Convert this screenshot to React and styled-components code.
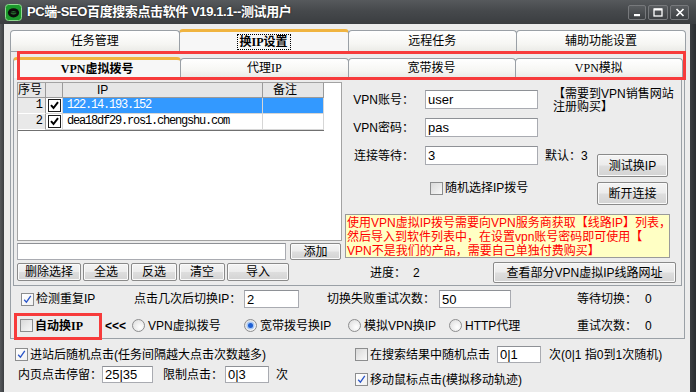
import React from 'react';
import styled, { createGlobalStyle, css } from 'styled-components';

const UI = `"Liberation Sans", "Noto Sans CJK SC", sans-serif`;
const SERIF = `"Liberation Serif", "Noto Sans CJK SC", serif`;
const MONO = `"Liberation Mono", "Noto Sans CJK SC", monospace`;

const GlobalStyle = createGlobalStyle`
  html, body { margin: 0; padding: 0; overflow: hidden; background: #2d3033; }
  body { font-family: ${UI}; font-size: 12px; line-height: 14px; color: #000; }
  *, *::before, *::after { box-sizing: border-box; }
  input, button { font-family: inherit; }
`;

const Window = styled.div`
  position: relative;
  width: 696px;
  height: 392px;
  display: flex;
  flex-direction: column;
  background: linear-gradient(90deg, #55585b 0, #3b3e41 4px, #3b3e41 calc(100% - 6px), #2a2d30 100%);
  overflow: hidden;
`;

const TitleBar = styled.div`
  flex: none;
  height: 24px;
  display: flex;
  align-items: center;
  padding: 0 7px 0 5px;
  background: linear-gradient(#56595c, #46494c 45%, #3a3d40);
`;

const TitleText = styled.div`
  margin-left: 5px;
  color: #fff;
  font: bold 13px/16px ${UI};
  letter-spacing: -0.4px;
  white-space: nowrap;
  text-shadow: 0 0 2px rgba(0, 0, 0, 0.7);
`;

const Caption = styled.div`
  margin-left: auto;
  align-self: flex-start;
  margin-top: 5px;
  display: flex;
  gap: 2px;
`;

const CapBtn = styled.div`
  width: ${p => p.$w}px;
  height: 15px;
  border: 1px solid #77797c;
  border-radius: 2px;
  background: linear-gradient(#5a5d60, #3d4043);
  display: flex;
  align-items: center;
  justify-content: center;
`;

const Body = styled.div`
  flex: 1;
  min-height: 0;
  margin: 0 6px 0 4px;
  padding: 5px 5px 0 6px;
  background: #ececec;
  display: flex;
  flex-direction: column;
`;

const TabStrip = styled.div`
  flex: none;
  display: flex;
  align-items: flex-end;
  height: ${p => p.$h}px;
  position: relative;
  z-index: 1;
`;

const Tab = styled.div`
  flex: 1 1 0;
  min-width: 0;
  height: calc(100% - 1px);
  display: flex;
  align-items: center;
  justify-content: center;
  border: 1px solid #9aa0a6;
  border-bottom: 0;
  border-radius: 4px 4px 0 0;
  margin-right: -1px;
  background: linear-gradient(#ffffff, #f6f6f3 65%, #ebebe7);
  font: normal 12px/14px ${SERIF};
  white-space: nowrap;
  ${p => p.$active && css`
    height: calc(100% + 1px);
    margin-bottom: -1px;
    border-top: 3px solid #f0b440;
    background: #f7f7f7;
    font-weight: bold;
    position: relative;
    z-index: 2;
  `}
`;

const Focus = styled.span`
  outline: 1px dotted #000;
  padding: 0 2px;
`;

const TabPage = styled.div`
  flex: none;
  height: 288px;
  border: 1px solid #9aa0a6;
  padding: 5px 2px 0;
  display: flex;
  flex-direction: column;
`;

const SubPage = styled.div`
  flex: none;
  height: 209px;
  border: 1px solid #9aa0a6;
  display: flex;
  padding: 4px 0 0 3px;
`;

const LeftCol = styled.div`
  flex: none;
  width: 325px;
  display: flex;
  flex-direction: column;
`;

const ListView = styled.div`
  flex: none;
  height: 159px;
  border: 1px solid #a3a3a3;
  background: #fff;
`;

const DataGrid = styled.div`
  display: grid;
  width: 306px;
  grid-template-columns: 28px 17px 200px 61px;
  grid-auto-rows: 16px;
  grid-template-rows: 15px;
  border-right: 1px solid #707070;
  border-bottom: 1px solid #707070;
`;

const HeadCell = styled.div`
  background: #e6e6e6;
  border-right: 1px solid #9a9a9a;
  border-bottom: 1px solid #9a9a9a;
  padding-left: ${p => p.$pl || 0}px;
  font: 12px/14px ${UI};
  white-space: nowrap;
  overflow: hidden;
`;

const NumCell = styled.div`
  background: #e9e9e9;
  border-right: 1px solid #9a9a9a;
  border-bottom: 1px solid #ffffff;
  text-align: right;
  padding-right: 3px;
  font: 12px/15px ${MONO};
  letter-spacing: -1px;
`;

const DataCell = styled.div`
  display: flex;
  align-items: center;
  justify-content: ${p => (p.$center ? 'center' : 'flex-start')};
  padding-left: ${p => (p.$center ? 0 : 4)}px;
  border-right: 1px solid #d6d6d6;
  border-bottom: 1px solid #d6d6d6;
  background: ${p => (p.$sel ? '#3399ff' : '#fff')};
  color: ${p => (p.$sel ? '#fff' : '#000')};
  font: 12px/15px ${MONO};
  letter-spacing: -1.2px;
  white-space: nowrap;
  overflow: hidden;
`;

const InputRow = styled.div`
  flex: none;
  display: flex;
  gap: 4px;
  height: 17px;
  margin-top: 2px;
`;

const ButtonRow = styled.div`
  flex: none;
  display: flex;
  gap: 2px;
  height: 18px;
  margin-top: 3px;
`;

const Btn = styled.button`
  flex: none;
  width: ${p => p.$w}px;
  height: ${p => p.$h || 18}px;
  padding: 0;
  margin-left: ${p => (p.$push ? 'auto' : '0')};
  font: 12px/1 ${UI};
  color: #000;
  border: 1px solid #8a8a8a;
  border-radius: 2px;
  background: linear-gradient(#f4f4f4, #ececec 48%, #dedede 52%, #d3d3d3);
  box-shadow: inset 0 0 0 1px #fafafa;
  white-space: nowrap;
`;

const Field = styled.input`
  flex: none;
  width: ${p => p.$w}px;
  height: ${p => p.$h || 18}px;
  margin-left: ${p => p.$ml || 0}px;
  border: 1px solid #a9abb1;
  border-top-color: #8e9196;
  background: #fff;
  padding: 0 2px;
  font: 13px/1 ${UI};
  color: #000;
  outline: none;
`;

const RightCol = styled.div`
  flex: 1;
  min-width: 0;
  padding: 8px 5px 0 2px;
  display: flex;
  flex-direction: column;
`;

const FormGrid = styled.div`
  display: grid;
  grid-template-columns: 81px 120px 52px 71px;
  grid-template-rows: 19px 19px 19px 31px;
  row-gap: 9px;
  align-items: center;
`;

const FieldLabel = styled.div`
  grid-column: 1;
  text-align: right;
  padding-right: 11px;
  white-space: nowrap;
`;

const Hint = styled.div`
  grid-column: 3 / 5;
  grid-row: 1 / 3;
  align-self: start;
  margin: -2px 0 0 8px;
  line-height: 13px;
  white-space: nowrap;
`;

const Default = styled.div`
  grid-column: 3;
  grid-row: 3;
  white-space: nowrap;
`;

const ButtonStack = styled.div`
  grid-column: 4;
  grid-row: 3 / 5;
  align-self: start;
  margin-top: 8px;
  display: flex;
  flex-direction: column;
  gap: 5px;
`;

const RandomOpt = styled.div`
  grid-column: 2 / 4;
  grid-row: 4;
  margin-left: 5px;
`;

const Notice = styled.div`
  flex: none;
  width: 325px;
  height: 44px;
  margin: 9px 0 0 1px;
  padding: 1px 0 0 1px;
  border: 1px solid #9a9a9a;
  background: #ffffc4;
  color: #ff0000;
  line-height: 14px;
  white-space: nowrap;
  overflow: hidden;
`;

const ProgressRow = styled.div`
  flex: none;
  display: flex;
  align-items: center;
  height: 21px;
  margin-top: 4px;
  padding-left: 26px;
`;

const Text = styled.span`
  flex: none;
  width: ${p => (p.$w ? `${p.$w}px` : 'auto')};
  margin-left: ${p => p.$ml || 0}px;
  font-weight: ${p => (p.$bold ? 'bold' : 'normal')};
  white-space: nowrap;
`;

const OptRow = styled.div`
  flex: none;
  display: flex;
  align-items: center;
  height: ${p => p.$h}px;
  margin-top: ${p => p.$mt || 0}px;
  padding-left: ${p => p.$pl || 0}px;
  white-space: nowrap;
`;

const Option = styled.span`
  flex: none;
  display: inline-flex;
  align-items: center;
  gap: ${p => p.$gap ?? 2}px;
  width: ${p => (p.$w ? `${p.$w}px` : 'auto')};
  font-weight: ${p => (p.$bold ? 'bold' : 'normal')};
  font-family: ${p => (p.$bold ? SERIF : UI)};
  white-space: nowrap;
`;

const Box = styled.span`
  flex: none;
  width: 13px;
  height: 13px;
  display: inline-flex;
  align-items: center;
  justify-content: center;
  border: 1px solid ${p => (p.$list ? '#1c1c1c' : '#8c8d8e')};
  background: ${p =>
    p.$list ? '#fff' : p.$on ? 'linear-gradient(135deg, #ffffff, #f1f1f1)' : 'linear-gradient(135deg, #d9d9d9, #f8f8f8)'};
`;

const RadioDot = styled.span`
  flex: none;
  width: 13px;
  height: 13px;
  border-radius: 50%;
  border: 1px solid #8c8d8e;
  background: radial-gradient(circle at 65% 65%, #ffffff, #dadada);
  display: inline-flex;
  align-items: center;
  justify-content: center;
  &::after {
    content: '';
    display: ${p => (p.$on ? 'block' : 'none')};
    width: 5px;
    height: 5px;
    border-radius: 50%;
    background: #1d5fd3;
    box-shadow: 0 0 0 1.5px #a9c8f3;
  }
`;

const BottomArea = styled.div`
  flex: none;
  display: flex;
  margin-top: 7px;
`;

const BottomCol = styled.div`
  flex: none;
  width: ${p => (p.$w ? `${p.$w}px` : 'auto')};
  padding-left: ${p => p.$pl || 0}px;
  display: flex;
  flex-direction: column;
`;

const Marker = styled.div`
  position: absolute;
  left: ${p => p.$x}px;
  top: ${p => p.$y}px;
  width: ${p => p.$w}px;
  height: ${p => p.$h}px;
  border: 3px solid #f73b3b;
  pointer-events: none;
  z-index: 5;
`;

const Check = ({ on, list }) => (
  <Box $on={on} $list={list}>
    {on && (
      <svg width="9" height="9" viewBox="0 0 9 9">
        <path
          d={list ? 'M1 4.2 L3.5 7 L8 1.2' : 'M1.2 4.8 L3.4 7.2 L7.8 0.8'}
          fill="none"
          stroke={list ? '#000' : '#2a55c8'}
          strokeWidth={list ? 2 : 1.3}
        />
      </svg>
    )}
  </Box>
);

const CheckOpt = ({ on, children, w, bold, gap }) => (
  <Option $w={w} $bold={bold} $gap={gap}>
    <Check on={on} />
    <span>{children}</span>
  </Option>
);

const RadioOpt = ({ on, children, w }) => (
  <Option $w={w} $gap={3}>
    <RadioDot $on={on} />
    <span>{children}</span>
  </Option>
);

const AppIcon = () => (
  <svg width="17" height="17" viewBox="0 0 17 17">
    <rect x="0.5" y="0.5" width="16" height="16" rx="3" fill="#1c9a2c" stroke="#8fd88f" />
    <ellipse cx="8.5" cy="8.8" rx="5.6" ry="4.6" fill="#0c0c0c" />
    <ellipse cx="8.5" cy="8.8" rx="3" ry="1.6" fill="#2f8f3a" />
    <rect x="5" y="8.3" width="7" height="1" fill="#0c0c0c" />
  </svg>
);

const rows = [
  { n: 1, ip: '122.14.193.152', sel: true },
  { n: 2, ip: 'dea18df29.ros1.chengshu.com', sel: false },
];

export default function App() {
  return (
    <>
      <GlobalStyle />
      <Window>
        <TitleBar>
          <AppIcon />
          <TitleText>PC端-SEO百度搜索点击软件 V19.1.1--测试用户</TitleText>
          <Caption>
            <CapBtn $w={18}>
              <svg width="8" height="8" viewBox="0 0 8 8"><rect x="1" y="5" width="6" height="2.2" fill="#fff" /></svg>
            </CapBtn>
            <CapBtn $w={20}>
              <svg width="10" height="9" viewBox="0 0 10 9"><rect x="1" y="1" width="8" height="7" fill="none" stroke="#fff" strokeWidth="1.3" /><rect x="1" y="0.5" width="8" height="2" fill="#fff" /></svg>
            </CapBtn>
            <CapBtn $w={19}>
              <svg width="10" height="9" viewBox="0 0 10 9"><path d="M1.5 1 L8.5 8 M8.5 1 L1.5 8" stroke="#fff" strokeWidth="1.7" /></svg>
            </CapBtn>
          </Caption>
        </TitleBar>

        <Body>
          <TabStrip $h={22}>
            <Tab>任务管理</Tab>
            <Tab $active><Focus>换IP设置</Focus></Tab>
            <Tab>远程任务</Tab>
            <Tab>辅助功能设置</Tab>
          </TabStrip>
          <TabPage>
            <TabStrip $h={20}>
              <Tab $active>VPN虚拟拨号</Tab>
              <Tab>代理IP</Tab>
              <Tab>宽带拨号</Tab>
              <Tab>VPN模拟</Tab>
            </TabStrip>
            <SubPage>
              <LeftCol>
                <ListView>
                  <DataGrid>
                    <HeadCell>序号</HeadCell>
                    <HeadCell />
                    <HeadCell $pl={34}>IP</HeadCell>
                    <HeadCell $pl={10}>备注</HeadCell>
                    {rows.map(r => (
                      <React.Fragment key={r.n}>
                        <NumCell>{r.n}</NumCell>
                        <DataCell $center><Check on list /></DataCell>
                        <DataCell $sel={r.sel}>{r.ip}</DataCell>
                        <DataCell $sel={r.sel} />
                      </React.Fragment>
                    ))}
                  </DataGrid>
                </ListView>
                <InputRow>
                  <Field $w={269} $h={17} readOnly value="" />
                  <Btn $w={51} $h={17}>添加</Btn>
                </InputRow>
                <ButtonRow>
                  <Btn $w={64}>删除选择</Btn>
                  <Btn $w={46}>全选</Btn>
                  <Btn $w={46}>反选</Btn>
                  <Btn $w={46}>清空</Btn>
                  <Btn $w={62}>导入</Btn>
                </ButtonRow>
              </LeftCol>

              <RightCol>
                <FormGrid>
                  <FieldLabel>VPN账号：</FieldLabel>
                  <Field $w={113} $h={19} readOnly value="user" />
                  <Hint>【需要到VPN销售网站<br />注册购买】</Hint>
                  <FieldLabel>VPN密码：</FieldLabel>
                  <Field $w={113} $h={19} readOnly value="pas" />
                  <FieldLabel>连接等待：</FieldLabel>
                  <Field $w={113} $h={19} readOnly value="3" />
                  <Default>默认：3</Default>
                  <ButtonStack>
                    <Btn $w={71} $h={23}>测试换IP</Btn>
                    <Btn $w={71} $h={23}>断开连接</Btn>
                  </ButtonStack>
                  <RandomOpt>
                    <CheckOpt>随机选择IP拨号</CheckOpt>
                  </RandomOpt>
                </FormGrid>
                <Notice>
                  使用VPN虚拟IP拨号需要向VPN服务商获取【线路IP】列表，<br />
                  然后导入到软件列表中，在设置vpn账号密码即可使用【<br />
                  VPN不是我们的产品，需要自己单独付费购买】
                </Notice>
                <ProgressRow>
                  <Text $w={43}>进度：</Text>
                  <Text>2</Text>
                  <Btn $w={183} $h={21} $push>查看部分VPN虚拟IP线路网址</Btn>
                </ProgressRow>
              </RightCol>
            </SubPage>

            <OptRow $h={18} $mt={4} $pl={8}>
              <CheckOpt on w={113}>检测重复IP</CheckOpt>
              <Text $w={110}>点击几次后切换IP：</Text>
              <Field $w={55} $h={18} readOnly value="2" />
              <Text $w={112} $ml={28}>切换失败重试次数：</Text>
              <Field $w={72} $h={18} readOnly value="50" />
              <Text $w={68} $ml={66}>等待切换：</Text>
              <Text>0</Text>
            </OptRow>
            <OptRow $h={25} $mt={5} $pl={7}>
              <CheckOpt w={85} bold>自动换IP</CheckOpt>
              <Text $w={27} $bold>&lt;&lt;&lt;</Text>
              <RadioOpt w={112}>VPN虚拟拨号</RadioOpt>
              <RadioOpt w={104} on>宽带拨号换IP</RadioOpt>
              <RadioOpt w={101}>模拟VPN换IP</RadioOpt>
              <RadioOpt w={128}>HTTP代理</RadioOpt>
              <Text $w={68}>重试次数：</Text>
              <Text>0</Text>
            </OptRow>
          </TabPage>

          <BottomArea>
            <BottomCol $w={345} $pl={5}>
              <OptRow $h={17}>
                <CheckOpt on>进站后随机点击(任务间隔越大点击次数越多)</CheckOpt>
              </OptRow>
              <OptRow $h={17} $mt={3} $pl={3}>
                <Text $w={84}>内页点击停留：</Text>
                <Field $w={51} $h={17} readOnly value="25|35" />
                <Text $w={62} $ml={10}>限制点击：</Text>
                <Field $w={44} $h={17} readOnly value="0|3" />
                <Text $ml={7}>次</Text>
              </OptRow>
            </BottomCol>
            <BottomCol>
              <OptRow $h={17}>
                <CheckOpt w={142}>在搜索结果中随机点击</CheckOpt>
                <Field $w={44} $h={17} readOnly value="0|1" />
                <Text $ml={8}>次(0|1 指0到1次随机)</Text>
              </OptRow>
              <OptRow $h={17} $mt={8}>
                <CheckOpt on>移动鼠标点击(模拟移动轨迹)</CheckOpt>
              </OptRow>
            </BottomCol>
          </BottomArea>
        </Body>

        <Marker $x={17} $y={51} $w={669} $h={29} />
        <Marker $x={14} $y={313} $w={88} $h={27} />
      </Window>
    </>
  );
}
